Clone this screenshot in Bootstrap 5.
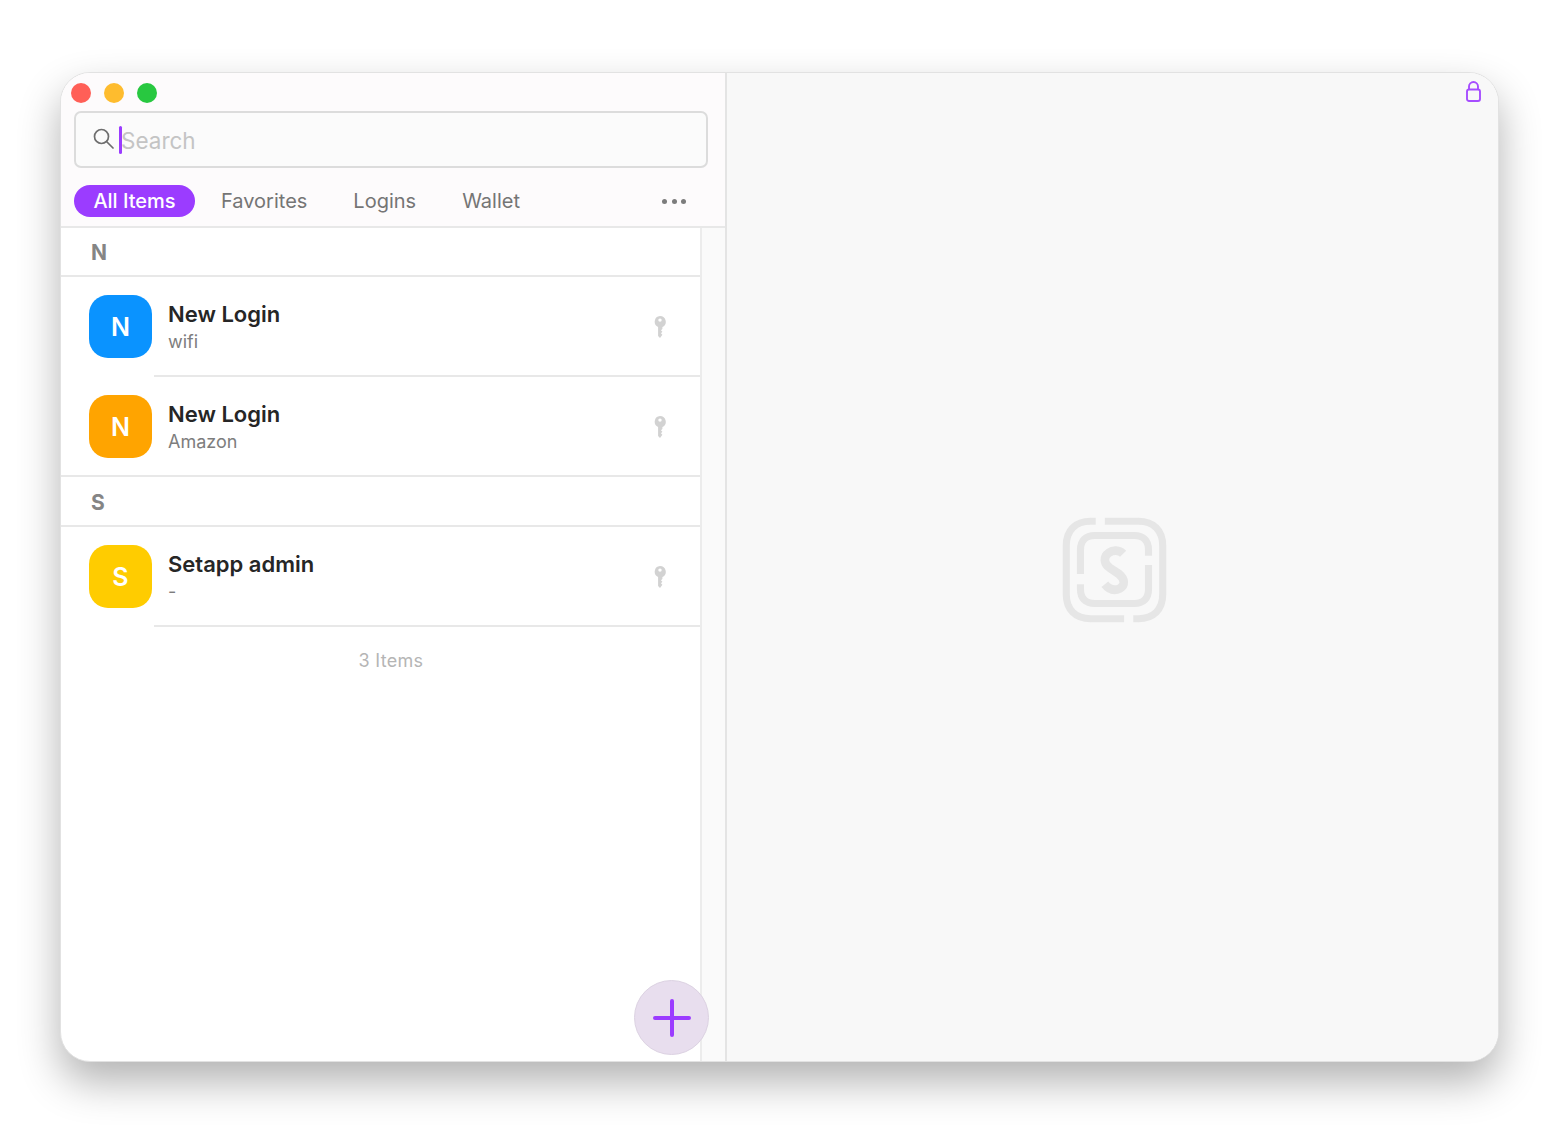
<!DOCTYPE html>
<html lang="en">
<head>
    <meta charset="UTF-8">
    <title>Passwords</title>
    <link href="https://cdn.jsdelivr.net/npm/bootstrap@5.3.0/dist/css/bootstrap.min.css" rel="stylesheet">
    <style>
        body {
            background: #fff;
            font-family: Inter, "Noto Sans", sans-serif;
            height: 1142px;
            overflow: hidden;
        }
        .app-window {
            width: 1439px;
            height: 990px;
            margin: 72px 0 0 60px;
            border: 1.5px solid #e2e2e2;
            border-radius: 30px;
            overflow: hidden;
            box-shadow: 0 20px 42px rgba(0,0,0,.3);
            background: #fff;
        }
        .pane-left {
            width: 664px;
            flex: none;
        }
        .pane-right {
            flex: 1;
            background: #f8f8f8;
            border-left: 2px solid #e4e4e4;
        }
        .top-area {
            height: 155px;
            background: #fdfbfc;
            border-bottom: 2px solid #e8e8e8;
            padding: 9px 17px 0 13px;
        }
        .traffic {
            gap: 13px;
            margin-left: -3px;
            height: 21px;
        }
        .dot-light {
            width: 20px;
            height: 20px;
            border-radius: 50%;
        }
        .search-box {
            height: 57px;
            margin-top: 8px;
            border: 2px solid #dcdcdc;
            border-radius: 7px;
            background: #fbfbfb;
            padding-left: 17px;
        }
        .search-glass {
            margin-top: -3px;
        }
        .caret-bar {
            width: 3px;
            height: 28px;
            background: #9b3cff;
            border-radius: 2px;
            margin-left: 5px;
        }
        .search-ph {
            font-size: 22.5px;
            color: #c4c4c4;
            margin-top: 2px;
            margin-left: -1px;
        }
        .tab-row {
            margin-top: 16.5px;
            height: 32px;
        }
        .tab-pill {
            background: #9b3cff;
            color: #fff;
            border-radius: 16px;
            width: 121px;
            height: 32px;
            font-size: 20px;
            font-weight: 500;
        }
        .tab-link {
            font-size: 20px;
            color: #757575;
            font-weight: 400;
        }
        .tab-first {
            margin-left: 26px;
        }
        .tab-gap {
            margin-left: 46px;
        }
        .more-dots {
            gap: 4.5px;
            margin: 2px 22px 0 0;
        }
        .more-dots span {
            width: 5px;
            height: 5px;
            background: #7c7c7c;
            border-radius: 50%;
        }
        .list-side {
            flex: 1;
            min-width: 0;
        }
        .scroll-track {
            width: 25px;
            flex: none;
            background: #fafafa;
            border-left: 2px solid #ececec;
        }
        .section-head {
            height: 49px;
            border-bottom: 2px solid #e8e8e8;
            padding: 10px 0 0 30px;
            font-size: 21px;
            font-weight: 700;
            line-height: 30px;
            color: #858585;
        }
        .section-tall {
            height: 50px;
            padding-top: 11px;
        }
        .login-row {
            height: 100px;
            padding-left: 28px;
        }
        .login-row::after {
            content: "";
            position: absolute;
            left: 93px;
            right: 0;
            bottom: 0;
            height: 2px;
            background: #e8e8e8;
        }
        .login-row.row-last::after {
            left: 0;
        }
        .tile {
            width: 63px;
            height: 63px;
            margin-top: -1px;
            padding-top: 2px;
            border-radius: 19px;
            color: #fff;
            font-size: 25px;
            font-weight: 600;
            flex: none;
        }
        .tile-blue { background: #0a93ff; }
        .tile-orange { background: #ffa400; }
        .tile-yellow { background: #ffcc00; }
        .row-text {
            margin-left: 16px;
            margin-top: -2px;
        }
        .row-title {
            font-size: 22px;
            font-weight: 600;
            line-height: 30px;
            color: #262626;
        }
        .row-sub {
            font-size: 18px;
            line-height: 24px;
            margin-top: 1px;
            color: #7d7d7d;
        }
        .key-icon {
            position: absolute;
            left: 593px;
            top: 39px;
        }
        .count-text {
            padding-left: 21px;
            text-align: center;
            font-size: 18px;
            letter-spacing: .3px;
            color: #b5b5b5;
            margin-top: 20px;
        }
        .fab {
            position: absolute;
            left: 573px;
            bottom: 6px;
            width: 75px;
            height: 75px;
            border-radius: 50%;
            background: #e8deee;
            border: 1px solid #dcd2e2;
            z-index: 2;
        }
        .logo-mark {
            margin: 6px 0 0 4px;
        }
        .lock-icon {
            position: absolute;
            top: 8px;
            right: 17px;
        }
    </style>
</head>
<body>

<div class="app-window d-flex">
    <div class="pane-left d-flex flex-column position-relative">
        <div class="top-area">
            <div class="traffic d-flex align-items-center">
                <span class="dot-light" style="background:#ff5f57"></span>
                <span class="dot-light" style="background:#febc2e"></span>
                <span class="dot-light" style="background:#28c840"></span>
            </div>
            <div class="search-box d-flex align-items-center">
                <svg class="search-glass" width="21" height="21" viewBox="0 0 21 21" fill="none" stroke="#6e6e6e" stroke-width="1.7" stroke-linecap="round">
                    <circle cx="8.500" cy="8.500" r="7"/>
                    <path d="M13.500 13.500 20 20"/>
                </svg>
                <span class="caret-bar"></span>
                <span class="search-ph">Search</span>
            </div>
            <div class="tab-row d-flex align-items-center">
                <span class="tab-pill d-flex align-items-center justify-content-center">All Items</span>
                <span class="tab-link tab-first">Favorites</span>
                <span class="tab-link tab-gap">Logins</span>
                <span class="tab-link tab-gap">Wallet</span>
                <span class="more-dots d-flex ms-auto"><span></span><span></span><span></span></span>
            </div>
        </div>
        <div class="d-flex flex-grow-1">
            <div class="list-side">
                <div class="section-head">N</div>
                <div class="login-row d-flex align-items-center position-relative">
                    <div class="tile tile-blue d-flex align-items-center justify-content-center">N</div>
                    <div class="row-text">
                        <div class="row-title">New Login</div>
                        <div class="row-sub">wifi</div>
                    </div>
                    <svg class="key-icon" width="12" height="22" viewBox="0 0 12 23" fill="#d2d2d2">
                        <path fill-rule="evenodd" d="M6 0a6 6 0 0 1 2.500 11.450V13.500L7 15l1.500 1.500L7 18l1.500 1.500L6 23l-2-2V11.450A6 6 0 0 1 6 0zm0 2.500a1.800 1.800 0 1 0 0 3.600 1.800 1.800 0 0 0 0-3.600z"/>
                    </svg>
                </div>
                <div class="login-row row-last d-flex align-items-center position-relative">
                    <div class="tile tile-orange d-flex align-items-center justify-content-center">N</div>
                    <div class="row-text">
                        <div class="row-title">New Login</div>
                        <div class="row-sub">Amazon</div>
                    </div>
                    <svg class="key-icon" width="12" height="22" viewBox="0 0 12 23" fill="#d2d2d2">
                        <path fill-rule="evenodd" d="M6 0a6 6 0 0 1 2.500 11.450V13.500L7 15l1.500 1.500L7 18l1.500 1.500L6 23l-2-2V11.450A6 6 0 0 1 6 0zm0 2.500a1.800 1.800 0 1 0 0 3.600 1.800 1.800 0 0 0 0-3.600z"/>
                    </svg>
                </div>
                <div class="section-head section-tall">S</div>
                <div class="login-row d-flex align-items-center position-relative">
                    <div class="tile tile-yellow d-flex align-items-center justify-content-center">S</div>
                    <div class="row-text">
                        <div class="row-title">Setapp admin</div>
                        <div class="row-sub">-</div>
                    </div>
                    <svg class="key-icon" width="12" height="22" viewBox="0 0 12 23" fill="#d2d2d2">
                        <path fill-rule="evenodd" d="M6 0a6 6 0 0 1 2.500 11.450V13.500L7 15l1.500 1.500L7 18l1.500 1.500L6 23l-2-2V11.450A6 6 0 0 1 6 0zm0 2.500a1.800 1.800 0 1 0 0 3.600 1.800 1.800 0 0 0 0-3.600z"/>
                    </svg>
                </div>
                <div class="count-text">3 Items</div>
            </div>
            <div class="scroll-track"></div>
        </div>
        <button class="fab d-flex align-items-center justify-content-center p-0" type="button" aria-label="Add">
            <svg width="38" height="38" viewBox="0 0 38 38" stroke="#9b3cff" stroke-width="4" stroke-linecap="round">
                <path d="M19 2v34M2 19h34"/>
            </svg>
        </button>
    </div>
    <div class="pane-right position-relative d-flex align-items-center justify-content-center">
        <svg class="logo-mark" width="132" height="132" viewBox="0 0 130 130" fill="none" stroke="#e6e6e6" stroke-width="7">
            <path d="M55 17H88C103 17 112 26 112 41V89C112 104 103 113 88 113H83"/>
            <path d="M74 113H41C26 113 17 104 17 89V41C17 26 26 17 41 17H46"/>
            <path d="M98 51V45C98 36 93 31 84 31H45C36 31 31 36 31 45V69"/>
            <path d="M31 79V84C31 93 36 98 45 98H84C93 98 98 93 98 84V60"/>
            <path stroke-width="8.500" d="M73 49C69 45 63 45 59 48C53 52 54 59 60 63L69 69C75 74 75 80 70 83C64 86 59 84 55 79"/>
        </svg>
        <svg class="lock-icon" width="15" height="21" viewBox="0 0 15 21" fill="none" stroke="#a64dff" stroke-width="1.900">
            <rect x="1" y="8.500" width="13" height="11.500" rx="2"/>
            <path d="M3 8.500V5.500a4.500 4.500 0 0 1 9 0V8.500"/>
        </svg>
    </div>
</div>

</body>
</html>
